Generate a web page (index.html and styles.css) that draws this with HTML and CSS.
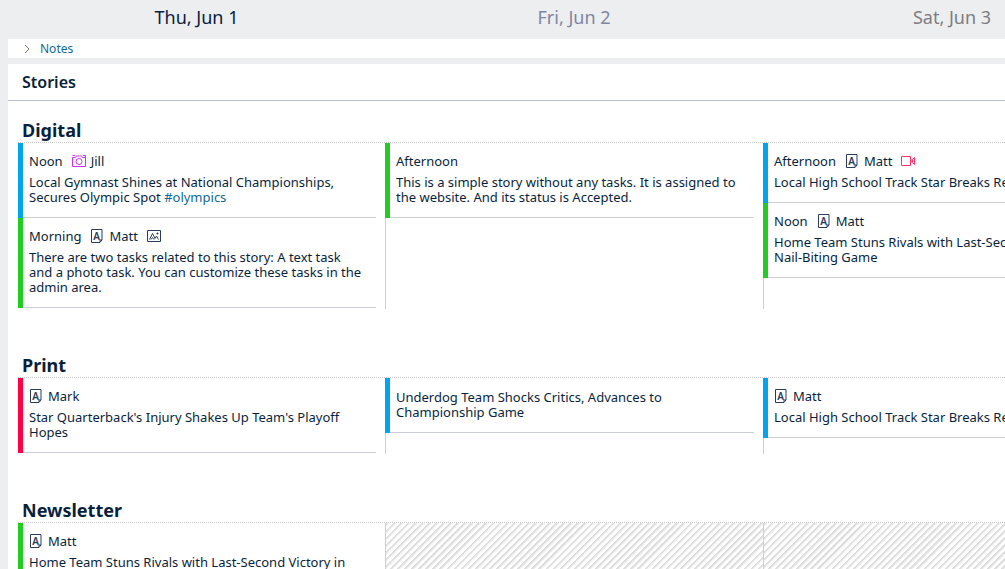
FILE: index.html
```html
<!DOCTYPE html>
<html lang="en">
<head>
  <meta charset="UTF-8" />
  <meta name="viewport" content="width=device-width, initial-scale=1" />
  <title>Stories</title>
  <link rel="stylesheet" href="styles.css">
</head>
<body>
  <!-- shared icons -->
  <svg class="sprite" aria-hidden="true">
    <symbol id="icon-text" viewBox="0 0 12 14">
      <path d="M.5 .5h10.500v10.500l-2 2.500h-8.500z M11 11h-2v2" />
      <text x="5.500" y="10.500" text-anchor="middle">A</text>
    </symbol>
    <symbol id="icon-camera" viewBox="0 0 14 14">
      <path d="M.5 3.500h3l1-1.500h5l1 1.500h3v9h-13z M.5 1.500h2.500 M11 1.500h2.500v2" />
      <circle cx="7" cy="7.500" r="3" />
    </symbol>
    <symbol id="icon-photo" viewBox="0 0 14 14">
      <path d="M.5 1.500h13v11h-13z M2.500 10.500l3-6 2.500 5 1.500-2.500 2 3.500 M4 10.500l1.500-2 1.500 2 M10.500 3.500v2 M9.500 4.500h2" />
    </symbol>
    <symbol id="icon-video" viewBox="0 0 14 14">
      <path d="M.5 2.500h9v9h-9z M9.500 7l4-3.500v7z M11.500 6v2" />
    </symbol>
  </svg>

  <main class="planner">
    <header class="days board">
      <h2 class="day today">Thu, Jun 1</h2>
      <h2 class="day">Fri, Jun 2</h2>
      <h2 class="day weekend">Sat, Jun 3</h2>
    </header>

    <div class="notes">
      <button class="notes-toggle" type="button">
        <svg class="chevron" viewBox="0 0 6 8"><path d="M1 0l4 4-4 4" /></svg>
        Notes
      </button>
    </div>

    <div class="stories">
      <h1 class="stories-title">Stories</h1>

      <section class="channel">
        <h3 class="channel-title">Digital</h3>
        <div class="board">
          <div class="column">
            <article class="card blue">
              <div class="meta">
                <span>Noon</span>
                <span class="task"><svg class="icon camera"><use href="#icon-camera" /></svg>Jill</span>
              </div>
              <p>Local Gymnast Shines at National Championships, Secures Olympic Spot <a href="#olympics">#olympics</a></p>
            </article>
            <article class="card green">
              <div class="meta">
                <span>Morning</span>
                <span class="task"><svg class="icon text"><use href="#icon-text" /></svg>Matt</span>
                <svg class="icon"><use href="#icon-photo" /></svg>
              </div>
              <p>There are two tasks related to this story: A text task <span class="keep">and a photo task.</span> You can customize these tasks in the admin area.</p>
            </article>
          </div>
          <div class="column">
            <article class="card green">
              <div class="meta"><span>Afternoon</span></div>
              <p>This is a simple story without any tasks. It is assigned to the website. And its status is Accepted.</p>
            </article>
          </div>
          <div class="column">
            <article class="card blue">
              <div class="meta">
                <span>Afternoon</span>
                <span class="task"><svg class="icon text"><use href="#icon-text" /></svg>Matt</span>
                <svg class="icon video"><use href="#icon-video" /></svg>
              </div>
              <p>Local High School Track Star Breaks Record</p>
            </article>
            <article class="card green">
              <div class="meta">
                <span>Noon</span>
                <span class="task"><svg class="icon text"><use href="#icon-text" /></svg>Matt</span>
              </div>
              <p>Home Team Stuns Rivals with Last-Second Victory in <span class="keep">Nail-Biting</span> Game</p>
            </article>
          </div>
        </div>
      </section>

      <section class="channel">
        <h3 class="channel-title">Print</h3>
        <div class="board">
          <div class="column">
            <article class="card red">
              <div class="meta">
                <span class="task"><svg class="icon text"><use href="#icon-text" /></svg>Mark</span>
              </div>
              <p>Star Quarterback's Injury Shakes Up Team's Playoff Hopes</p>
            </article>
          </div>
          <div class="column">
            <article class="card blue plain">
              <p>Underdog Team Shocks Critics, Advances to <span class="keep">Championship Game</span></p>
            </article>
          </div>
          <div class="column">
            <article class="card blue">
              <div class="meta">
                <span class="task"><svg class="icon text"><use href="#icon-text" /></svg>Matt</span>
              </div>
              <p>Local High School Track Star Breaks Record</p>
            </article>
          </div>
        </div>
      </section>

      <section class="channel">
        <h3 class="channel-title">Newsletter</h3>
        <div class="board">
          <div class="column">
            <article class="card green">
              <div class="meta">
                <span class="task"><svg class="icon text"><use href="#icon-text" /></svg>Matt</span>
              </div>
              <p>Home Team Stuns Rivals with Last-Second Victory in <span class="keep">Nail-Biting</span> Game</p>
            </article>
          </div>
          <div class="column closed"></div>
          <div class="column closed"></div>
        </div>
      </section>
    </div>
  </main>
</body>
</html>
```
FILE: styles.css
```css
:root {
  --bg: #edeef0;
  --text: #0a1f3c;
  --link: #0f6a96;
  --line: #cbced6;
  --blue: #00a4ef;
  --green: #22cc22;
  --red: #ff0044;
}

* {
  box-sizing: border-box;
  margin: 0;
  padding: 0;
}

body {
  font-family: "Noto Sans", "Open Sans", sans-serif;
  font-size: 13px;
  line-height: 15px;
  background: var(--bg);
  color: var(--text);
}

a {
  color: var(--link);
  text-decoration: none;
}

.sprite {
  position: absolute;
  width: 0;
  height: 0;
}

.planner {
  height: 100vh;
  overflow: hidden;
  padding-left: 8px;
}

.board {
  display: grid;
  grid-template-columns: 377px repeat(2, minmax(378px, 1fr));
}

.day {
  font-size: 18px;
  font-weight: 400;
  line-height: 34px;
  padding-bottom: 5px;
  text-align: center;
  color: #7f86a0;
}

.day.today {
  color: var(--text);
}

.day.weekend {
  color: #7d7d80;
}

.notes {
  background: #fff;
  height: 19px;
  margin-bottom: 6px;
  padding-left: 16px;
}

.notes-toggle {
  display: flex;
  align-items: center;
  gap: 10px;
  border: none;
  background: none;
  font: inherit;
  font-size: 12px;
  line-height: 19px;
  color: var(--link);
  cursor: pointer;
}

.chevron {
  width: 6px;
  height: 8px;
  fill: none;
  stroke: #77776a;
}

.stories {
  background: #fff;
}

.stories-title {
  font-size: 16px;
  font-weight: 600;
  line-height: 36px;
  padding-left: 14px;
  border-bottom: 1px solid #babfcc;
}

.channel {
  padding: 17px 0 27px;
}

.channel-title {
  font-size: 18px;
  font-weight: 700;
  line-height: 24px;
  margin-left: 10px;
  padding-left: 4px;
  border-bottom: 1px dotted #c8c8c8;
}

.column {
  padding: 0 9px 1px 0;
  border-left: 1px solid var(--line);
}

.column:first-child {
  padding-left: 10px;
  border-left: none;
}

.card {
  margin-left: -1px;
  padding: 9px 0 13px 6px;
  border-left: 5px solid var(--blue);
  box-shadow: inset 0 -1px var(--line);
}

.column:first-child .card {
  margin-left: 0;
}

.card.green {
  border-left-color: var(--green);
}

.card.red {
  border-left-color: var(--red);
}

.card.plain {
  padding-top: 12px;
}

.keep {
  white-space: nowrap;
}

.meta {
  display: flex;
  align-items: center;
  gap: 9px;
  height: 18px;
  margin-bottom: 5px;
}

.task {
  display: flex;
  align-items: center;
  gap: 5px;
}

.icon {
  width: 14px;
  height: 14px;
  fill: none;
  stroke: #2b3b5c;
}

.icon.text {
  width: 12px;
  margin: 0 1px;
}

.icon.camera {
  stroke: #cc33ee;
}

.icon.video {
  stroke: #ff3366;
}

.sprite text {
  font-size: 10px;
  font-weight: 600;
  fill: #2b3b5c;
  stroke: none;
}

.closed {
  background: repeating-linear-gradient(135deg, #ddd 0, #ddd 1px, #fff 3px, #fff 5px);
}
```
